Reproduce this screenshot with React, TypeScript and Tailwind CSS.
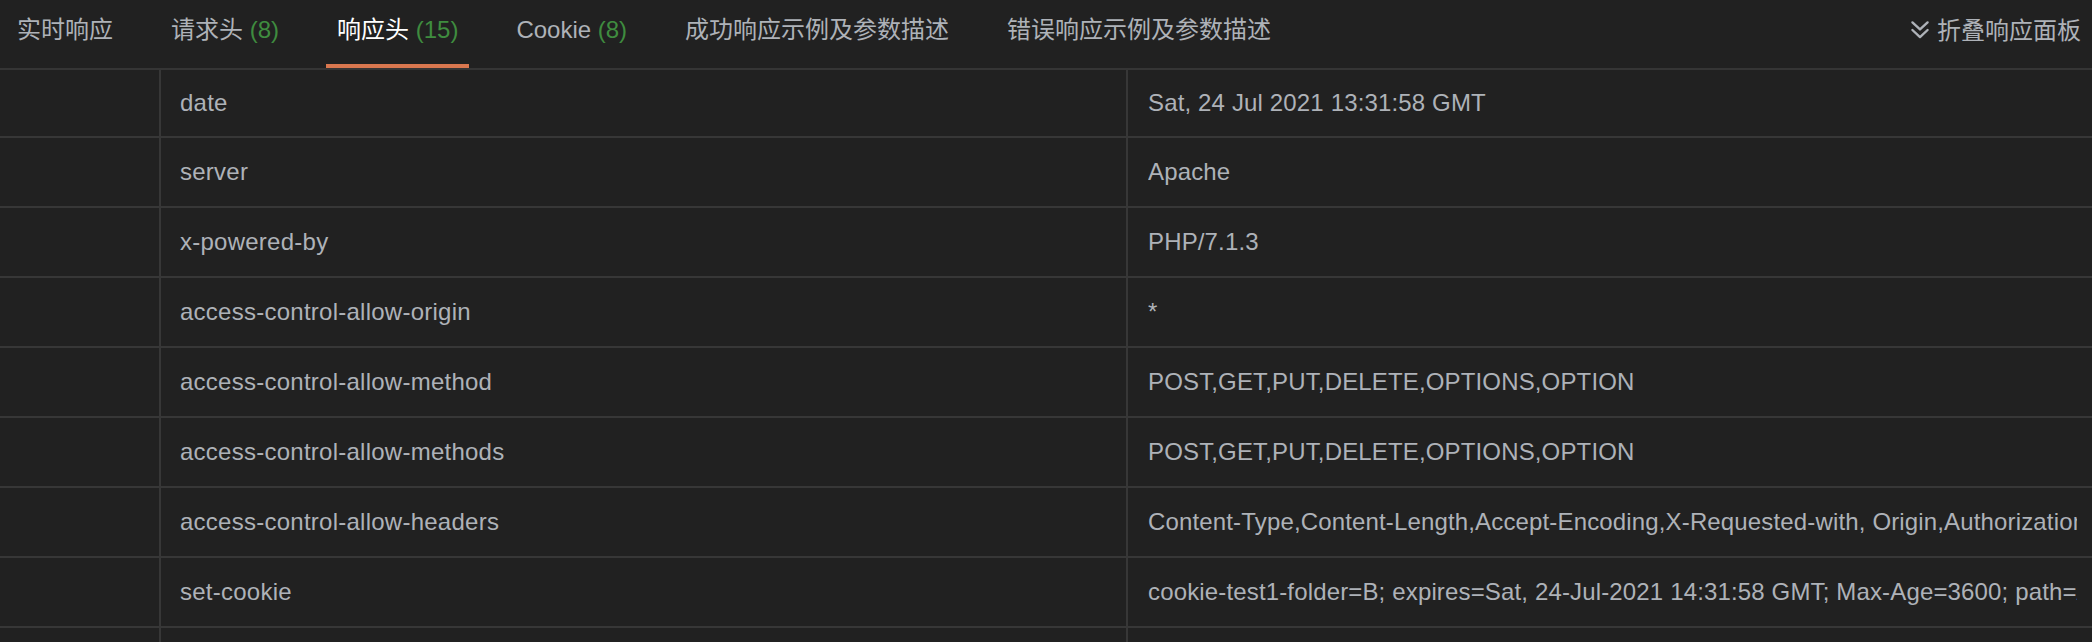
import React from "react";

const tabs: { label: string; count?: string; active?: boolean }[] = [
  { label: "实时响应" },
  { label: "请求头", count: "(8)" },
  { label: "响应头", count: "(15)", active: true },
  { label: "Cookie", count: "(8)" },
  { label: "成功响应示例及参数描述" },
  { label: "错误响应示例及参数描述" },
];

const rows: [string, string][] = [
  ["date", "Sat, 24 Jul 2021 13:31:58 GMT"],
  ["server", "Apache"],
  ["x-powered-by", "PHP/7.1.3"],
  ["access-control-allow-origin", "*"],
  ["access-control-allow-method", "POST,GET,PUT,DELETE,OPTIONS,OPTION"],
  ["access-control-allow-methods", "POST,GET,PUT,DELETE,OPTIONS,OPTION"],
  [
    "access-control-allow-headers",
    "Content-Type,Content-Length,Accept-Encoding,X-Requested-with, Origin,Authorization",
  ],
  [
    "set-cookie",
    "cookie-test1-folder=B; expires=Sat, 24-Jul-2021 14:31:58 GMT; Max-Age=3600; path=/",
  ],
  ["", ""],
];

function ChevronsDown() {
  return (
    <svg
      width="26"
      height="26"
      viewBox="0 0 24 24"
      fill="none"
      stroke="currentColor"
      strokeWidth="2.2"
      strokeLinecap="round"
      strokeLinejoin="round"
    >
      <path d="M5 5l7 6.5 7-6.5" />
      <path d="M5 12l7 6.5 7-6.5" />
    </svg>
  );
}

export default function App() {
  return (
    <div
      className="w-full h-[642px] overflow-hidden bg-[#212121] text-[#aeb2b8] text-[24px]"
      style={{ fontFamily: '"Liberation Sans", "Noto Sans CJK SC", sans-serif' }}
    >
      {/* Tabs header */}
      <div className="flex h-[70px] border-b-2 border-[#353535] pl-[6px] pr-[11px]">
        <div className="flex gap-[36px]">
          {tabs.map((t) => (
            <div
              key={t.label}
              className={`relative h-[68px] px-[11px] pt-[14px] leading-[32px] whitespace-nowrap ${
                t.active ? "text-white" : "text-[#aeb2b8]"
              }`}
            >
              {t.label}
              {t.count && <span className="text-[#3f8c3f]"> {t.count}</span>}
              {t.active && (
                <div className="absolute left-0 right-0 bottom-0 h-[4px] bg-[#d9774f]" />
              )}
            </div>
          ))}
        </div>
        <div className="ml-auto flex items-start pt-[15px] gap-[4px] leading-[32px] whitespace-nowrap">
          <span className="mt-[2px] text-[#aeb2b8]">
            <ChevronsDown />
          </span>
          <span>折叠响应面板</span>
        </div>
      </div>

      {/* Table */}
      <div className="flex flex-col">
        {rows.map(([k, v], i) => (
          <div
            key={i}
            className={`flex ${i === 0 ? "h-[68px]" : "h-[70px]"} border-b-2 border-[#373737]`}
          >
            <div className="w-[161px] shrink-0 border-r-2 border-[#373737]" />
            <div className="w-[967px] shrink-0 border-r-2 border-[#373737] pl-[19px] flex items-center whitespace-nowrap overflow-hidden tracking-[0.25px]">
              {k}
            </div>
            <div className="flex-1 min-w-0 pl-[20px] pr-[15px] flex items-center">
              <div className="overflow-hidden whitespace-nowrap tracking-[0.15px]">{v}</div>
            </div>
          </div>
        ))}
      </div>
    </div>
  );
}
